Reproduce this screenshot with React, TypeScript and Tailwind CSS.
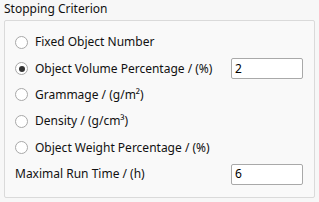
import React from "react";

const rows = [
  { label: "Fixed Object Number", checked: false },
  { label: "Object Volume Percentage / (%)", checked: true, value: "2" },
  { label: "Grammage / (g/m²)", checked: false },
  { label: "Density / (g/cm³)", checked: false },
  { label: "Object Weight Percentage / (%)", checked: false },
];

function Radio({ checked }: { checked: boolean }) {
  return (
    <div className="w-[13px] h-[13px] rounded-full border border-[#a8a8a8] bg-white flex items-center justify-center shrink-0">
      {checked && <div className="w-[6px] h-[6px] rounded-full bg-[#333333]" />}
    </div>
  );
}

function Input({ value }: { value: string }) {
  return (
    <div className="w-[72px] h-[21px] border border-[#a9a9a9] rounded-[2px] bg-white flex items-center pl-[3px] text-[12px] text-black">
      {value}
    </div>
  );
}

export default function App() {
  return (
    <div
      className="w-[319px] h-[202px] bg-[#f7f7f7] text-[12px] text-[#111] pl-[4px] pr-[4px]"
      style={{ fontFamily: '"Noto Sans", "Open Sans", sans-serif' }}
    >
      <div className="h-[20px] pt-[1px] leading-[16px]">Stopping Criterion</div>
      <div className="w-[311px] h-[178px] border border-[#dadada] rounded-[2px] bg-[#f9f9f9] pt-[8px] flex flex-col">
        {rows.map((r) => (
          <div key={r.label} className="h-[26.4px] flex items-center pl-[10px] shrink-0">
            <Radio checked={r.checked} />
            <span className="ml-[7px] leading-[16px]">{r.label}</span>
            {r.value && (
              <div className="ml-auto mr-[11px]">
                <Input value={r.value} />
              </div>
            )}
          </div>
        ))}
        <div className="h-[26.4px] flex items-center pl-[10px] shrink-0">
          <span className="leading-[16px]">Maximal Run Time / (h)</span>
          <div className="ml-auto mr-[11px]">
            <Input value="6" />
          </div>
        </div>
      </div>
    </div>
  );
}
